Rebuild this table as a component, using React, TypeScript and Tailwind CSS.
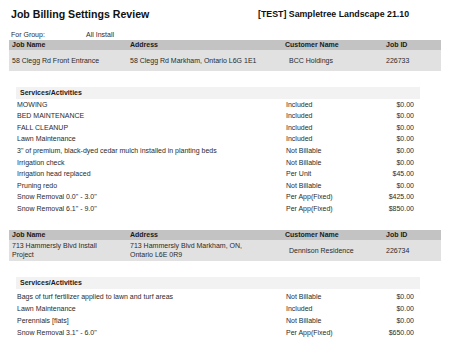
const jobs = [
  {
    name: "58 Clegg Rd Front Entrance",
    address: "58 Clegg Rd Markham, Ontario L6G 1E1",
    customer: "BCC Holdings",
    id: "226733",
    rowClass: "h-[11.6px]",
    services: [
      ["MOWING", "Included", "$0.00"],
      ["BED MAINTENANCE", "Included", "$0.00"],
      ["FALL CLEANUP", "Included", "$0.00"],
      ["Lawn Maintenance", "Included", "$0.00"],
      ['3" of premium, black-dyed cedar mulch installed in planting beds', "Not Billable", "$0.00"],
      ["Irrigation check", "Not Billable", "$0.00"],
      ["Irrigation head replaced", "Per Unit", "$45.00"],
      ["Pruning redo", "Not Billable", "$0.00"],
      ['Snow Removal 0.0" - 3.0"', "Per App(Fixed)", "$425.00"],
      ['Snow Removal 6.1" - 9.0"', "Per App(Fixed)", "$850.00"],
    ],
  },
  {
    name: "713 Hammersly Blvd Install Project",
    address: "713 Hammersly Blvd Markham, ON, Ontario L6E 0R9",
    customer: "Dennison Residence",
    id: "226734",
    rowClass: "h-[12px]",
    services: [
      ["Bags of turf fertilizer applied to lawn and turf areas", "Not Billable", "$0.00"],
      ["Lawn Maintenance", "Included", "$0.00"],
      ["Perennials [flats]", "Not Billable", "$0.00"],
      ['Snow Removal 3.1" - 6.0"', "Per App(Fixed)", "$650.00"],
    ],
  },
]

function JobBlock({ job, first }: { job: (typeof jobs)[number]; first: boolean }) {
  return (
    <div className={first ? "" : "mt-[15px]"}>
      {/* Job header */}
      <div className="ml-[9px] w-[432px]">
        <div className="grid grid-cols-[118px_155px_100px_59px] h-[10px] items-center bg-[#c3c3c3] font-bold text-[#1a1a1a]">
          <div className="pl-[3px]">Job Name</div>
          <div className="pl-[3px]">Address</div>
          <div className="pl-[3px]">Customer Name</div>
          <div className="pl-[4px]">Job ID</div>
        </div>
        <div className="grid grid-cols-[118px_155px_100px_59px] min-h-[21px] items-center bg-[#e1e1e1] leading-[9px]">
          <div className="pl-[3px] pr-[8px]">{job.name}</div>
          <div className="pl-[3px] pr-[20px]">{job.address}</div>
          <div className="pl-[7px]">{job.customer}</div>
          <div className="pl-[4px]">{job.id}</div>
        </div>
      </div>

      {/* Services */}
      <div className="ml-[16px] w-[404px] mt-[16px]">
        <div className="h-[12px] flex items-center pl-[4px] bg-[#f2f2f2] font-bold text-[#1a1a1a]">
          Services/Activities
        </div>
        <div className={first ? "" : "mt-[2px]"}>
          {job.services.map(([item, type, amount], i) => (
            <div key={i} className={`${job.rowClass} flex items-center`}>
              <div className="w-[270px] pl-[1px] whitespace-nowrap">{item}</div>
              <div className="flex-1">{type}</div>
              <div className="pr-[6px] text-right">{amount}</div>
            </div>
          ))}
        </div>
      </div>
    </div>
  )
}

export default function App() {
  return (
    <div className="w-[454px] h-[346px] overflow-hidden bg-white font-['Liberation_Sans',Arial,sans-serif] text-[7px] text-[#2b2b2b]">
      {/* Title row */}
      <div className="h-[30px] flex items-center pl-[11px]">
        <div className="w-[247px] text-[10.6px] font-bold text-[#111]">Job Billing Settings Review</div>
        <div className="text-[8.8px] font-bold text-[#111]">[TEST] Sampletree Landscape 21.10</div>
      </div>

      {/* Group */}
      <div className="h-[10px] flex items-center pl-[11px]">
        <div className="w-[75px]">For Group:</div>
        <div>All Install</div>
      </div>

      {jobs.map((job, i) => (
        <JobBlock key={job.id} job={job} first={i === 0} />
      ))}
    </div>
  )
}
